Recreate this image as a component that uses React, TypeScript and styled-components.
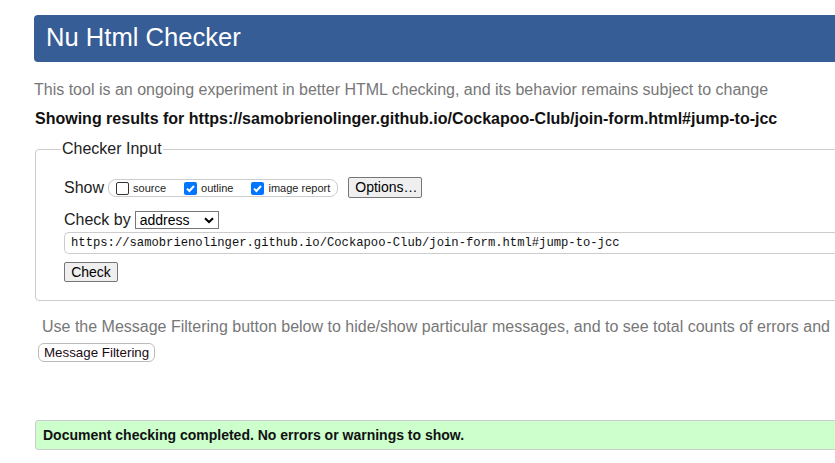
import React from "react";
import styled, { createGlobalStyle } from "styled-components";

const Global = createGlobalStyle`
  html, body {
    margin: 0;
    padding: 0;
    background: #fff;
    overflow: hidden;
  }
  body {
    font-family: "Liberation Sans", Arial, sans-serif;
    color: #000;
  }
`;

const Page = styled.div`
  width: 1100px;
  padding: 15px 0 0 34px;
  box-sizing: border-box;
`;

const Header = styled.h1`
  margin: 0;
  height: 47px;
  box-sizing: border-box;
  padding: 0 0 2px 12px;
  display: flex;
  align-items: center;
  background: #365d95;
  color: #fff;
  border-radius: 4px;
  font-size: 25.6px;
  font-weight: normal;
  line-height: 1.15;
`;

const Tagline = styled.p`
  margin: 19px 0 0 0;
  font-size: 16px;
  line-height: 18px;
  color: #777;
`;

const Showing = styled.p`
  margin: 11px 0 0 1px;
  font-size: 16px;
  line-height: 18px;
  font-weight: bold;
  color: #111;
`;

const Fieldset = styled.fieldset`
  margin: 12px 0 0 1px;
  border: 1px solid #ccc;
  border-radius: 4px;
  padding: 19px 0 18px 28px;
  min-width: 0;
`;

const Legend = styled.legend`
  margin-left: -3px;
  padding: 0 1px;
  font-size: 16px;
  line-height: 18px;
  color: #222;
`;

const Row = styled.div<{ $top?: number }>`
  display: flex;
  align-items: center;
  margin-top: ${(p) => p.$top ?? 0}px;
  font-size: 16px;
  color: #222;
`;

const RowLabel = styled.span`
  font-size: 16px;
  line-height: 18px;
  margin-right: 4px;
`;

const CheckGroup = styled.div`
  display: flex;
  align-items: center;
  height: 18px;
  box-sizing: border-box;
  border: 1px solid #ccc;
  border-radius: 8px;
  padding: 0 7px 0 7px;
  margin-right: 10px;
  margin-top: 1px;
`;

const CheckLabel = styled.label<{ $gap?: number }>`
  display: flex;
  align-items: center;
  font-size: 11px;
  color: #222;
  margin-right: ${(p) => p.$gap ?? 0}px;
  line-height: 13px;
`;

const Box = styled.span<{ $on?: boolean }>`
  width: 13px;
  height: 13px;
  box-sizing: border-box;
  border-radius: 2px;
  margin-right: 4px;
  display: inline-flex;
  align-items: center;
  justify-content: center;
  background: ${(p) => (p.$on ? "#0075ff" : "#fff")};
  border: ${(p) => (p.$on ? "none" : "1px solid #333")};
`;

const NativeButton = styled.button`
  font-family: "Liberation Sans", Arial, sans-serif;
  font-size: 14px;
  line-height: 16px;
  color: #000;
  background: #efefef;
  border: 1px solid #767676;
  border-radius: 2px;
  padding: 1px 6px 2px;
  box-sizing: border-box;
  height: 21px;
`;

const OptionsButton = styled(NativeButton)`
  width: 74px;
`;

const CheckButton = styled(NativeButton)`
  width: 54px;
  height: 20px;
  padding: 0 6px 1px;
`;

const SelectBox = styled.div`
  position: relative;
  width: 84px;
  height: 18px;
  box-sizing: border-box;
  border: 1px solid #767676;
  display: flex;
  align-items: center;
  padding-left: 4px;
  font-size: 14px;
  color: #000;
  background: #fff;
`;

const Chevron = styled.svg`
  position: absolute;
  right: 4px;
  top: 5px;
`;

const UrlInput = styled.div`
  margin-top: 3px;
  height: 22px;
  box-sizing: border-box;
  border: 1px solid #ccc;
  border-right: none;
  border-radius: 5px 0 0 5px;
  display: flex;
  align-items: center;
  padding-left: 6px;
  font-family: "Liberation Mono", "DejaVu Sans Mono", monospace;
  font-size: 12.2px;
  color: #111;
  white-space: nowrap;
`;

const Note = styled.p`
  margin: 17px 0 0 8px;
  font-size: 16px;
  line-height: 18px;
  color: #777;
  white-space: nowrap;
`;

const FilterButton = styled.button`
  margin: 7px 0 0 4px;
  height: 19px;
  box-sizing: border-box;
  padding: 0 5px;
  border: 1px solid #bbb;
  border-radius: 6px;
  background: #fff;
  font-family: "Liberation Sans", Arial, sans-serif;
  font-size: 13.33px;
  line-height: 16px;
  color: #1a0a14;
`;

const Success = styled.div`
  margin: 58px 0 0 1px;
  height: 30px;
  box-sizing: border-box;
  padding: 0 0 0 7px;
  display: flex;
  align-items: center;
  background: #ccffcc;
  border: 1px solid #ccc;
  border-radius: 3px;
  font-size: 14px;
  font-weight: bold;
  color: #111;
`;

const Tick = () => (
  <svg width="11" height="11" viewBox="0 0 11 11">
    <path d="M2 5.6 L4.4 8 L9 3" stroke="#fff" strokeWidth="2" fill="none" />
  </svg>
);

export default function App() {
  return (
    <>
      <Global />
      <Page>
        <Header>Nu Html Checker</Header>
        <Tagline>
          This tool is an ongoing experiment in better HTML checking, and its behavior remains subject to change
        </Tagline>
        <Showing>
          Showing results for https://samobrienolinger.github.io/Cockapoo-Club/join-form.html#jump-to-jcc
        </Showing>
        <Fieldset>
          <Legend>Checker Input</Legend>
          <Row>
            <RowLabel>Show</RowLabel>
            <CheckGroup>
              <CheckLabel $gap={18}>
                <Box />
                source
              </CheckLabel>
              <CheckLabel $gap={18}>
                <Box $on>
                  <Tick />
                </Box>
                outline
              </CheckLabel>
              <CheckLabel>
                <Box $on>
                  <Tick />
                </Box>
                image report
              </CheckLabel>
            </CheckGroup>
            <OptionsButton>Options…</OptionsButton>
          </Row>
          <Row $top={13}>
            <RowLabel>Check by</RowLabel>
            <SelectBox>
              address
              <Chevron width="10" height="7" viewBox="0 0 10 7">
                <path d="M1 1.2 L5 5 L9 1.2" stroke="#000" strokeWidth="2" fill="none" />
              </Chevron>
            </SelectBox>
          </Row>
          <UrlInput>https://samobrienolinger.github.io/Cockapoo-Club/join-form.html#jump-to-jcc</UrlInput>
          <Row $top={8}>
            <CheckButton>Check</CheckButton>
          </Row>
        </Fieldset>
        <Note>
          Use the Message Filtering button below to hide/show particular messages, and to see total counts of errors and
        </Note>
        <FilterButton>Message Filtering</FilterButton>
        <Success>Document checking completed. No errors or warnings to show.</Success>
      </Page>
    </>
  );
}
